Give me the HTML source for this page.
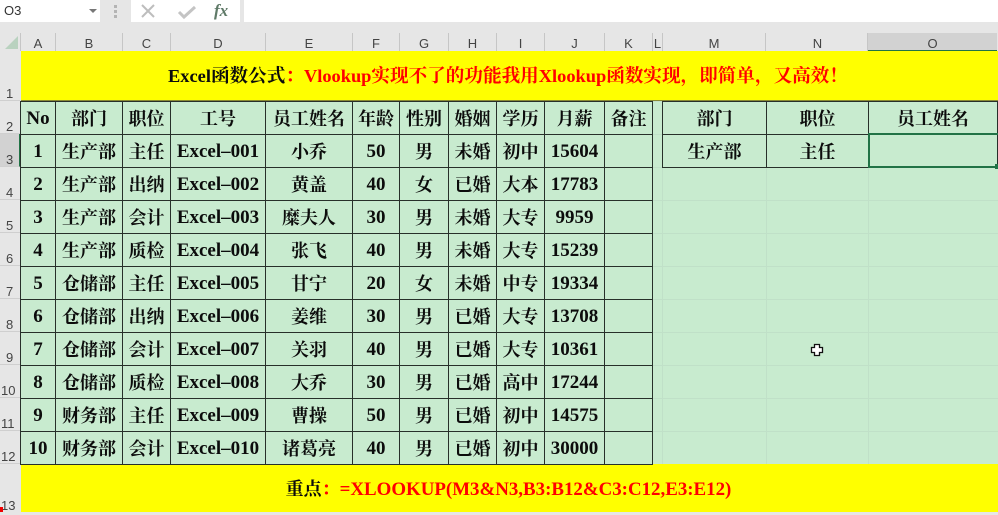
<!DOCTYPE html>
<html><head><meta charset="utf-8">
<style>
html,body{margin:0;padding:0}
body{width:998px;height:512px;overflow:hidden;position:relative;background:#e6e6e6;font-family:"Liberation Serif","Noto Serif CJK SC",serif}
#w{position:absolute;left:0;top:0;width:998px;height:512px;filter:blur(.3px)}
.a{position:absolute}
.ch,.rh{position:absolute;font:13px/16px "Liberation Sans","DejaVu Sans",sans-serif;color:#444;text-align:center}
.ch{top:33px;height:18px;line-height:21px;border-right:1px solid #c6c6c6;box-sizing:border-box}
.rh{left:0;width:20px;height:33px;line-height:16px;text-align:left;padding-left:6px;box-sizing:border-box;padding-top:18px;border-bottom:1px solid #cfcfcf}
#bg{left:21px;top:51px;width:977px;height:461px;background-color:#c8ebcf;background-image:linear-gradient(#c0e0c8 1px,transparent 1px);background-size:100% 33px;background-position:0 17px}
.v{position:absolute;top:167px;width:1px;height:297px;background:#c0e0c8}
table{position:absolute;border-collapse:collapse;table-layout:fixed;font-weight:bold;font-size:18px;color:#0c0c0c;text-align:center}
tr{height:33px}
td{border:1px solid #27302a;height:30px;padding:2px 0 0;white-space:nowrap;overflow:hidden;line-height:30px}
td.e{font-size:19px}
.y{position:absolute;background:#ff0;left:21px;font-weight:bold;text-align:center;white-space:nowrap;color:#0c0c0c}
.r{color:#f00}
.l{font-size:18.4px}
.m{font-size:18.9px}
</style></head><body><div id="w">
<div class="a" style="left:0;top:0;width:998px;height:23px;background:#e6e6e6"></div>
<div class="a" style="left:0;top:0;width:100px;height:22px;background:#fff;font:13px/22px 'Liberation Sans',sans-serif;color:#333;text-indent:4px">O3</div>
<div class="a" style="left:89px;top:9px;width:0;height:0;border:4px solid transparent;border-top:4px solid #777"></div>
<div class="a" style="left:114px;top:5px;width:3px;height:3px;background:#b4b4b4;box-shadow:0 5px 0 #b4b4b4,0 10px 0 #b4b4b4"></div>
<div class="a" style="left:131px;top:0;width:109px;height:22px;background:#fff"></div>
<div class="a" style="left:244px;top:0;width:754px;height:22px;background:#fff"></div>
<svg class="a" style="left:131px;top:0" width="109" height="22"><path d="M11 5L23 17M23 5L11 17" stroke="#bdbdbd" stroke-width="2" fill="none"/><path d="M48 12L53 17L64 7" stroke="#c4c4c4" stroke-width="3" fill="none"/><text x="83" y="16" font-family="Liberation Serif,serif" font-style="italic" font-weight="bold" font-size="17" fill="#5f7a68">fx</text></svg>

<svg class="a" style="left:0;top:33px" width="21" height="18"><path d="M18 3V16H5Z" fill="#b9d2bf"/></svg>
<div class="a" style="left:20px;top:33px;width:1px;height:18px;background:#c6c6c6"></div>
<div class="ch" style="left:21px;width:35px">A</div>
<div class="ch" style="left:56px;width:67px">B</div>
<div class="ch" style="left:123px;width:48px">C</div>
<div class="ch" style="left:171px;width:95px">D</div>
<div class="ch" style="left:266px;width:87px">E</div>
<div class="ch" style="left:353px;width:47px">F</div>
<div class="ch" style="left:400px;width:49px">G</div>
<div class="ch" style="left:449px;width:48px">H</div>
<div class="ch" style="left:497px;width:48px">I</div>
<div class="ch" style="left:545px;width:60px">J</div>
<div class="ch" style="left:605px;width:48px">K</div>
<div class="ch" style="left:653px;width:10px">L</div>
<div class="ch" style="left:663px;width:103px">M</div>
<div class="ch" style="left:766px;width:102px;padding-left:2px">N</div>
<div class="ch" style="left:868px;width:129px;background:#d2d2d2;border-bottom:1px solid #217346;border-right:none">O</div>

<div class="rh" style="top:51px;height:50px;padding-top:35px">1</div>
<div class="rh" style="top:101px">2</div>
<div class="rh" style="top:134px;background:#d2d2d2;border-right:1px solid #217346">3</div>
<div class="rh" style="top:167px">4</div>
<div class="rh" style="top:200px">5</div>
<div class="rh" style="top:233px">6</div>
<div class="rh" style="top:266px">7</div>
<div class="rh" style="top:299px">8</div>
<div class="rh" style="top:332px">9</div>
<div class="rh" style="top:365px;padding-left:1px">10</div>
<div class="rh" style="top:398px;padding-left:1px">11</div>
<div class="rh" style="top:431px;padding-left:1px">12</div>
<div class="rh" style="top:464px;height:48px;padding-top:34px;padding-left:1px;border:none">13</div>
<div class="a" style="left:0;top:507px;width:3px;height:5px;background:#e00"></div>

<div class="a" id="bg"></div>
<div class="v" style="left:662px"></div>
<div class="v" style="left:766px"></div>
<div class="v" style="left:868px"></div>

<div class="y" style="top:51px;width:977px;height:50px;line-height:50px;font-size:18.6px;border-bottom:1px solid #8a8a30;box-sizing:border-box;padding-right:3px"><span class="l">Excel</span>函数公式<span class="r">：<span class="l">Vlookup</span>实现不了的功能我用<span class="l">Xlookup</span>函数实现，即简单，又高效！</span></div>
<div class="y" style="top:464px;width:977px;height:48px;line-height:50px;font-size:18px;box-sizing:border-box;padding-right:2px">重点<span class="r">：<span class="m">=XLOOKUP(M3&amp;N3,B3:B12&amp;C3:C12,E3:E12)</span></span></div>

<table style="left:20px;top:101px;width:633px">
<colgroup><col style="width:35px"><col style="width:67px"><col style="width:48px"><col style="width:95px"><col style="width:87px"><col style="width:47px"><col style="width:49px"><col style="width:48px"><col style="width:48px"><col style="width:60px"><col style="width:48px"></colgroup>
<tr><td class="e">No</td><td>部门</td><td>职位</td><td>工号</td><td>员工姓名</td><td>年龄</td><td>性别</td><td>婚姻</td><td>学历</td><td>月薪</td><td>备注</td></tr>
<tr><td class="e">1</td><td>生产部</td><td>主任</td><td class="e">Excel–001</td><td>小乔</td><td class="e">50</td><td>男</td><td>未婚</td><td>初中</td><td class="e">15604</td><td></td></tr>
<tr><td class="e">2</td><td>生产部</td><td>出纳</td><td class="e">Excel–002</td><td>黄盖</td><td class="e">40</td><td>女</td><td>已婚</td><td>大本</td><td class="e">17783</td><td></td></tr>
<tr><td class="e">3</td><td>生产部</td><td>会计</td><td class="e">Excel–003</td><td>糜夫人</td><td class="e">30</td><td>男</td><td>未婚</td><td>大专</td><td class="e">9959</td><td></td></tr>
<tr><td class="e">4</td><td>生产部</td><td>质检</td><td class="e">Excel–004</td><td>张飞</td><td class="e">40</td><td>男</td><td>未婚</td><td>大专</td><td class="e">15239</td><td></td></tr>
<tr><td class="e">5</td><td>仓储部</td><td>主任</td><td class="e">Excel–005</td><td>甘宁</td><td class="e">20</td><td>女</td><td>未婚</td><td>中专</td><td class="e">19334</td><td></td></tr>
<tr><td class="e">6</td><td>仓储部</td><td>出纳</td><td class="e">Excel–006</td><td>姜维</td><td class="e">30</td><td>男</td><td>已婚</td><td>大专</td><td class="e">13708</td><td></td></tr>
<tr><td class="e">7</td><td>仓储部</td><td>会计</td><td class="e">Excel–007</td><td>关羽</td><td class="e">40</td><td>男</td><td>已婚</td><td>大专</td><td class="e">10361</td><td></td></tr>
<tr><td class="e">8</td><td>仓储部</td><td>质检</td><td class="e">Excel–008</td><td>大乔</td><td class="e">30</td><td>男</td><td>已婚</td><td>高中</td><td class="e">17244</td><td></td></tr>
<tr><td class="e">9</td><td>财务部</td><td>主任</td><td class="e">Excel–009</td><td>曹操</td><td class="e">50</td><td>男</td><td>已婚</td><td>初中</td><td class="e">14575</td><td></td></tr>
<tr><td class="e">10</td><td>财务部</td><td>会计</td><td class="e">Excel–010</td><td>诸葛亮</td><td class="e">40</td><td>男</td><td>已婚</td><td>初中</td><td class="e">30000</td><td></td></tr>
</table>

<table style="left:662px;top:101px;width:335px">
<colgroup><col style="width:104px"><col style="width:102px"><col style="width:129px"></colgroup>
<tr><td>部门</td><td>职位</td><td>员工姓名</td></tr>
<tr><td>生产部</td><td>主任</td><td></td></tr>
</table>

<div class="a" style="left:868px;top:133px;width:130px;height:35px;box-sizing:border-box;border:2px solid #217346;border-right:none"></div>
<div class="a" style="left:995px;top:164px;width:3px;height:5px;background:#217346"></div>

<svg class="a" style="left:810px;top:343px" width="14" height="14"><path d="M4.500 1.500H9.500V4.500H12.500V9.500H9.500V12.500H4.500V9.500H1.500V4.500H4.500Z" fill="#fff" stroke="#111" stroke-width="1.300"/></svg>
</div></body></html>
